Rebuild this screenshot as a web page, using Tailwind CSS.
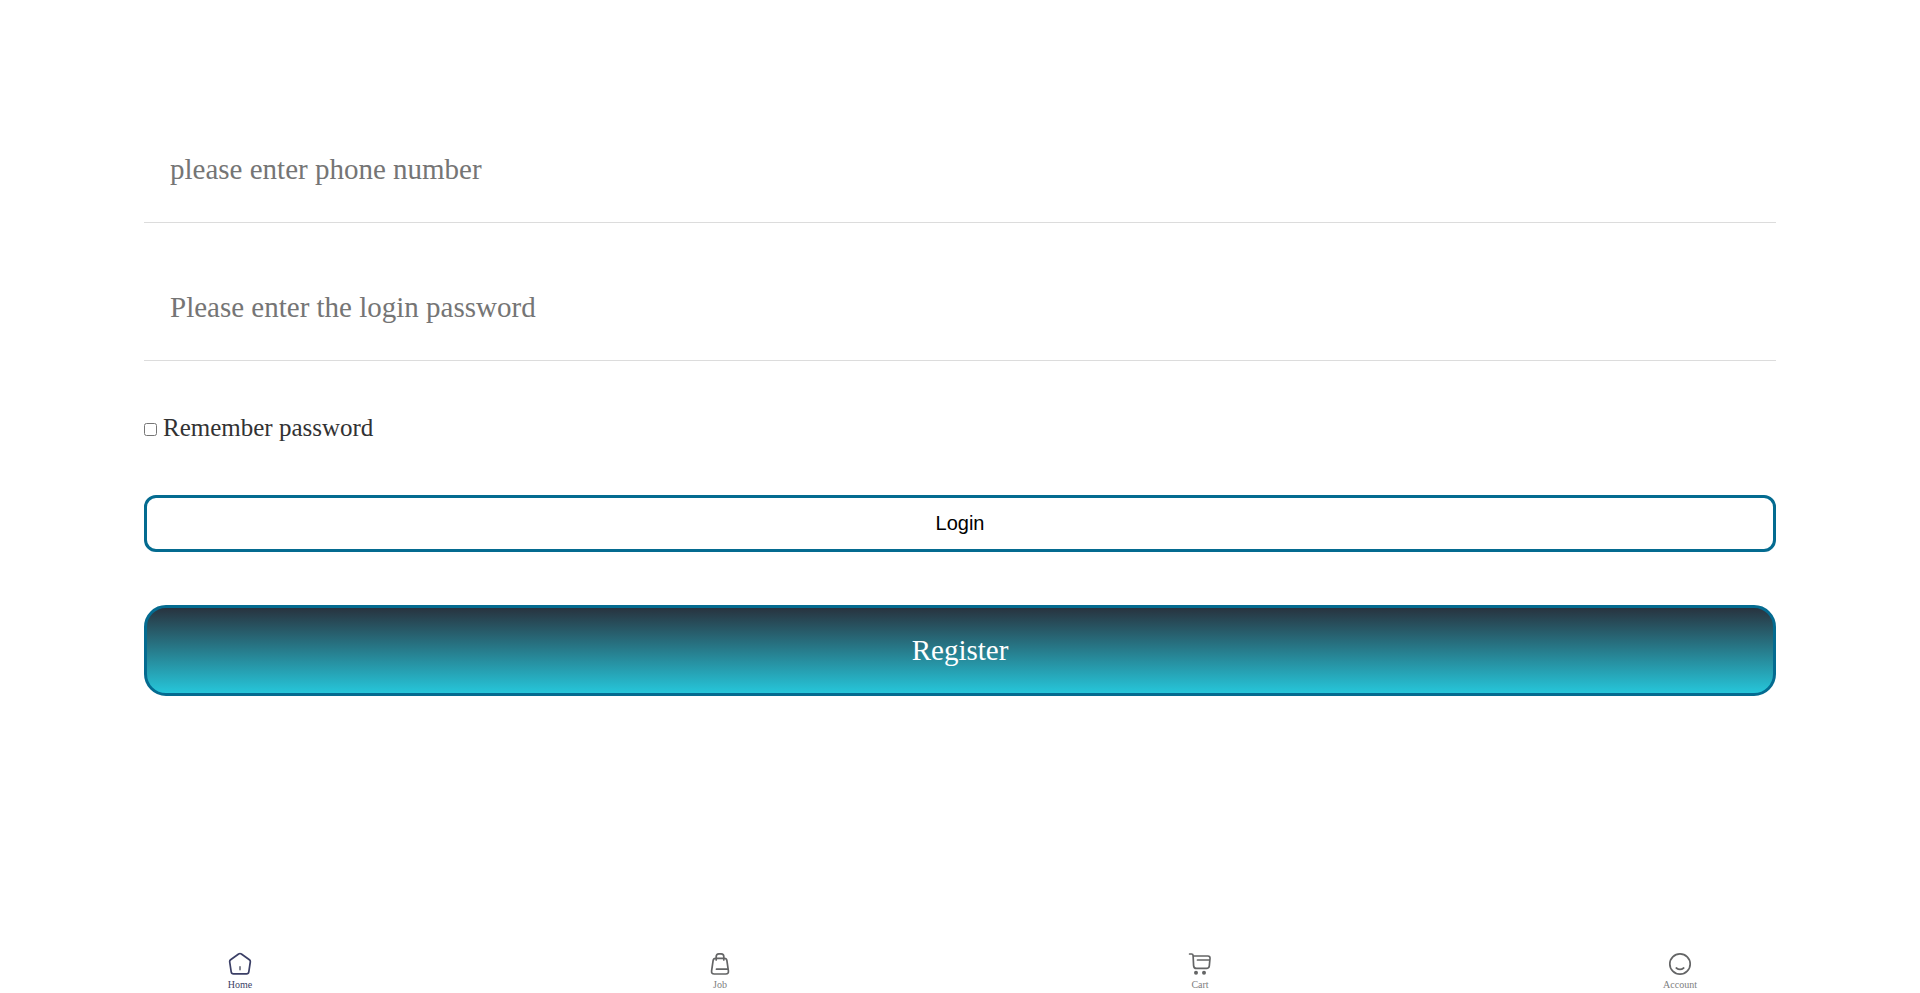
<!DOCTYPE html>
<html lang="en">
<head>
    <meta charset="UTF-8">
    <meta name="viewport" content="width=device-width, initial-scale=1.0">
    <title>Login</title>
    <script src="https://cdn.jsdelivr.net/npm/@tailwindcss/browser@4"></script>
</head>
<body class="min-h-screen flex flex-col bg-white text-[#323233] font-['Liberation_Serif',serif]">
    <main class="flex-1 px-[7.5%] pt-[85px]">
        <form>
            <input id="phone" type="tel" aria-label="Phone number" placeholder="please enter phone number"
                   class="block w-full mt-[34px] h-[104px] px-[26px] pb-[2px] text-[29px] border-b border-[#dcdcdc] placeholder:text-[#757575] focus:outline-none">
            <input id="password" type="password" aria-label="Password" placeholder="Please enter the login password"
                   class="block w-full mt-[34px] h-[104px] px-[26px] pb-[2px] text-[29px] border-b border-[#dcdcdc] placeholder:text-[#757575] focus:outline-none">

            <div class="mt-[52px] flex items-center gap-[6px]">
                <input id="remember" type="checkbox" class="w-[13px] h-[13px] mt-[2px]">
                <label for="remember" class="text-[25px] leading-[30px]">Remember password</label>
            </div>

            <button type="button" class="block w-full mt-[52px] h-[57px] pb-[2px] rounded-xl border-3 border-[#046b90] bg-white text-black text-xl font-['Liberation_Sans',sans-serif]">
                Login
            </button>
            <button type="button" class="block w-full mt-[53px] h-[91px] rounded-[22px] border-3 border-[#046b90] bg-linear-to-b/srgb from-[#28333f] to-[#26c6da] text-white text-[29px]">
                Register
            </button>
        </form>
    </main>

    <!-- Bottom tab bar -->
    <nav class="grid grid-cols-4 h-[43px] text-[10px] leading-[12px] text-[#7d7e80]">
        <a href="#" class="flex flex-col items-center gap-[3px] pt-[2px] text-[#3b3f66]">
            <svg class="w-6 h-6" viewBox="0 0 24 24" fill="none" stroke="currentColor" stroke-width="1.7" stroke-linecap="round" stroke-linejoin="round">
                <path d="M10.6 2 2.6 7.8Q1.5 8.6 1.7 10L3.2 19.8Q3.5 21.8 5.5 21.8H18.5Q20.5 21.8 20.8 19.8L22.3 10Q22.5 8.6 21.4 7.8L13.4 2Q12 1 10.6 2Z"/>
                <path d="M12 14.8v2.8" stroke="#6f7280"/>
            </svg>
            Home
        </a>
        <a href="#" class="flex flex-col items-center gap-[3px] pt-[2px]">
            <svg class="w-6 h-6" viewBox="0 0 24 24" fill="none" stroke="#646566" stroke-width="1.7" stroke-linecap="round" stroke-linejoin="round">
                <path d="M7.6 6.4H16.4Q18.6 6.4 18.9 8.6L20.4 18.8Q20.8 22 17.8 22H6.2Q3.2 22 3.6 18.8L5.1 8.6Q5.4 6.4 7.6 6.4Z"/>
                <path d="M8.2 8V4.6Q8.2 1.8 10.8 1.8H13.2Q15.8 1.8 15.8 4.6V8M8.5 17.2H19.5"/>
            </svg>
            Job
        </a>
        <a href="#" class="flex flex-col items-center gap-[3px] pt-[2px]">
            <svg class="w-6 h-6" viewBox="0 0 24 24" fill="none" stroke="#646566" stroke-width="1.7" stroke-linecap="round" stroke-linejoin="round">
                <path d="M1.6 2H3.6Q5 2 5.1 3.6L5.6 13.6Q5.8 16.4 8.4 16.4H18.6Q21 16.4 21.3 14L22 6.4Q22.1 4 19.9 4H5.2M9.5 8H21"/>
                <g fill="#646566" stroke="none">
                    <circle cx="8" cy="20.8" r="2"/>
                    <circle cx="16" cy="20.8" r="2"/>
                </g>
            </svg>
            Cart
        </a>
        <a href="#" class="flex flex-col items-center gap-[3px] pt-[2px]">
            <svg class="w-6 h-6" viewBox="0 0 24 24" fill="none" stroke="#646566" stroke-width="1.7" stroke-linecap="round">
                <circle cx="12" cy="12" r="10.2"/>
                <path d="M8.3 16Q12 18.8 15.7 16"/>
            </svg>
            Account
        </a>
    </nav>
</body>
</html>
